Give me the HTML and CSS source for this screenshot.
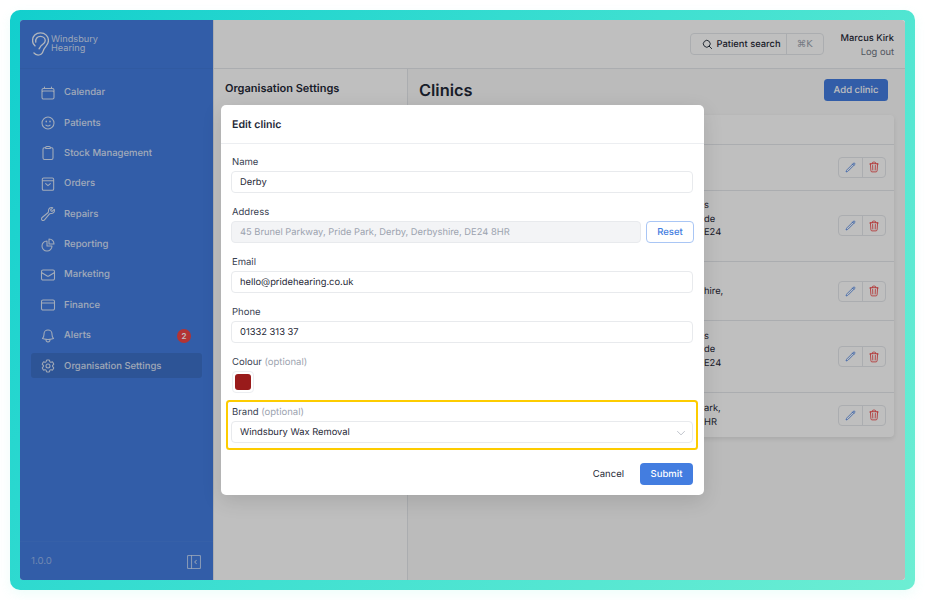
FILE: index.html
```html
<!DOCTYPE html>
<html lang="en">
<head>
<meta charset="utf-8">
<title>Edit clinic</title>
<link rel="stylesheet" href="styles.css">
</head>
<body>
<svg class="defs" aria-hidden="true">
  <symbol id="i-pencil" viewBox="0 0 24 24"><path d="M16.862 4.487l1.687-1.688a1.875 1.875 0 112.652 2.652L6.832 19.82a4.5 4.5 0 01-1.897 1.13l-2.685.8.8-2.685a4.5 4.5 0 011.13-1.897L16.863 4.487zm0 0L19.5 7.125"/></symbol>
  <symbol id="i-trash" viewBox="0 0 24 24"><path d="M14.74 9l-.346 9m-4.788 0L9.26 9m9.968-3.21c.342.052.682.107 1.022.166m-1.022-.165L18.16 19.673a2.25 2.25 0 01-2.244 2.077H8.084a2.25 2.25 0 01-2.244-2.077L4.772 5.79m14.456 0a48.108 48.108 0 00-3.478-.397m-12 .562c.34-.059.68-.114 1.022-.165m0 0a48.11 48.11 0 013.478-.397m7.5 0v-.916c0-1.18-.91-2.164-2.09-2.201a51.964 51.964 0 00-3.32 0c-1.18.037-2.09 1.022-2.09 2.201v.916m7.5 0a48.667 48.667 0 00-7.5 0"/></symbol>
</svg>
<div class="frame">
  <div class="app">
    <aside class="sidebar">
      <div class="brand">
        <svg class="ear" viewBox="0 0 18 25"><path d="M3.2 14.5C1.8 13.5.6 11.5.6 9 .6 4 4 .8 9 .8c5 0 8.4 3.4 8.4 8.2 0 5-4.4 6.5-5.4 10.5-1 3.5-3 4.7-5.5 4.7-2 0-3.5-.8-4.5-2.2"/><path d="M4 10.5C3.4 7 5.6 4.4 9 4.4c3 0 5 2.2 5 4.6 0 2.8-3 3.5-4.5 5.5-.9 1.3-1.5 2.5-2 3"/></svg>
        <div class="brand-name">Windsbury<br>Hearing</div>
      </div>
      <nav class="nav">
        <a class="nav-item"><svg class="ico" viewBox="0 0 24 24"><path d="M6.75 3v2.25M17.25 3v2.25M3 18.75V7.5a2.25 2.25 0 012.25-2.25h13.5A2.25 2.25 0 0121 7.5v11.25m-18 0A2.25 2.25 0 005.25 21h13.5A2.25 2.25 0 0021 18.75m-18 0v-7.5A2.25 2.25 0 015.25 9h13.5A2.25 2.25 0 0121 11.25v7.5"/></svg>Calendar</a>
        <a class="nav-item"><svg class="ico" viewBox="0 0 24 24"><path d="M15.182 15.182a4.5 4.5 0 01-6.364 0M21 12a9 9 0 11-18 0 9 9 0 0118 0zM9.75 9.75c0 .414-.168.75-.375.75S9 10.164 9 9.75 9.168 9 9.375 9s.375.336.375.75zm5.625 0c0 .414-.168.75-.375.75s-.375-.336-.375-.75.168-.75.375-.75.375.336.375.75z"/></svg>Patients</a>
        <a class="nav-item"><svg class="ico" viewBox="0 0 24 24"><path d="M15.666 3.888A2.25 2.25 0 0013.5 2.25h-3c-1.03 0-1.9.693-2.166 1.638m7.332 0c.055.194.084.4.084.612v0a.75.75 0 01-.75.75H9a.75.75 0 01-.75-.75v0c0-.212.03-.418.084-.612m7.332 0c.646.049 1.288.11 1.927.184 1.1.128 1.907 1.077 1.907 2.185V19.5a2.25 2.25 0 01-2.25 2.25H6.75A2.25 2.25 0 014.5 19.5V6.257c0-1.108.806-2.057 1.907-2.185a48.208 48.208 0 011.927-.184"/></svg>Stock Management</a>
        <a class="nav-item"><svg class="ico" viewBox="0 0 24 24"><path d="M5.5 3h13a2 2 0 012 2v14.5a2 2 0 01-2 2h-13a2 2 0 01-2-2V5a2 2 0 012-2zM3.5 7h17M8.5 11.5l3.5 3 3.5-3"/></svg>Orders</a>
        <a class="nav-item"><svg class="ico" viewBox="0 0 24 24"><path d="M21.75 6.75a4.5 4.5 0 01-4.884 4.484c-1.076-.091-2.264.071-2.95.904l-7.152 8.684a2.548 2.548 0 11-3.586-3.586l8.684-7.152c.833-.686.995-1.874.904-2.95a4.5 4.5 0 016.336-4.486l-3.276 3.276a3.004 3.004 0 002.25 2.25l3.276-3.276c.256.565.398 1.192.398 1.852z"/></svg>Repairs</a>
        <a class="nav-item"><svg class="ico" viewBox="0 0 24 24"><path d="M10.5 6a7.5 7.5 0 107.5 7.5h-7.5V6z"/><path d="M13.5 10.5H21A7.5 7.5 0 0013.5 3v7.5z"/></svg>Reporting</a>
        <a class="nav-item"><svg class="ico" viewBox="0 0 24 24"><path d="M21.75 6.75v10.5a2.25 2.25 0 01-2.25 2.25h-15a2.25 2.25 0 01-2.25-2.25V6.75m19.5 0A2.25 2.25 0 0019.5 4.5h-15a2.25 2.25 0 00-2.25 2.25m19.5 0v.243a2.25 2.25 0 01-1.07 1.916l-7.5 4.615a2.25 2.25 0 01-2.36 0L3.32 8.91a2.25 2.25 0 01-1.07-1.916V6.75"/></svg>Marketing</a>
        <a class="nav-item"><svg class="ico" viewBox="0 0 24 24"><path d="M2.25 9h19.5M4.5 19.5h15a2.25 2.25 0 002.25-2.25V6.75A2.25 2.25 0 0019.5 4.5h-15a2.25 2.25 0 00-2.25 2.25v10.5A2.25 2.25 0 004.5 19.5z"/></svg>Finance</a>
        <a class="nav-item"><svg class="ico" viewBox="0 0 24 24"><path d="M14.857 17.082a23.848 23.848 0 005.454-1.31A8.967 8.967 0 0118 9.75v-.7V9A6 6 0 006 9v.75a8.967 8.967 0 01-2.312 6.022c1.733.64 3.56 1.085 5.455 1.31m5.714 0a24.255 24.255 0 01-5.714 0m5.714 0a3 3 0 11-5.714 0"/></svg>Alerts<span class="badge">2</span></a>
        <a class="nav-item active"><svg class="ico" viewBox="0 0 24 24"><path d="M9.594 3.94c.09-.542.56-.94 1.11-.94h2.593c.55 0 1.02.398 1.11.94l.213 1.281c.063.374.313.686.645.87.074.04.147.083.22.127.324.196.72.257 1.075.124l1.217-.456a1.125 1.125 0 011.37.49l1.296 2.247a1.125 1.125 0 01-.26 1.431l-1.003.827c-.293.24-.438.613-.431.992a6.759 6.759 0 010 .255c-.007.378.138.75.43.99l1.005.828c.424.35.534.954.26 1.43l-1.298 2.247a1.125 1.125 0 01-1.369.491l-1.217-.456c-.355-.133-.75-.072-1.076.124a6.57 6.57 0 01-.22.128c-.331.183-.581.495-.644.869l-.213 1.28c-.09.543-.56.941-1.11.941h-2.594c-.55 0-1.02-.398-1.11-.94l-.213-1.281c-.062-.374-.312-.686-.644-.87a6.52 6.52 0 01-.22-.127c-.325-.196-.72-.257-1.076-.124l-1.217.456a1.125 1.125 0 01-1.369-.49l-1.297-2.247a1.125 1.125 0 01.26-1.431l1.004-.827c.292-.24.437-.613.43-.992a6.932 6.932 0 010-.255c.007-.378-.138-.75-.43-.99l-1.004-.828a1.125 1.125 0 01-.26-1.43l1.297-2.247a1.125 1.125 0 011.37-.491l1.216.456c.356.133.751.072 1.076-.124.072-.044.146-.087.22-.128.332-.183.582-.495.644-.869l.214-1.281z"/><path d="M15 12a3 3 0 11-6 0 3 3 0 016 0z"/></svg>Organisation Settings</a>
      </nav>
      <div class="side-foot">
        <span class="version">1.0.0</span>
        <svg class="collapse" viewBox="0 0 14 14"><rect x=".5" y=".5" width="13" height="13" rx="1"/><path d="M4.5 .5v13M9.6 5L7.8 7l1.8 2"/></svg>
      </div>
    </aside>
    <div class="content">
      <header class="topbar">
        <div class="search">
          <span class="search-main"><svg class="search-ico" viewBox="0 0 24 24"><path d="M21 21l-5.197-5.197m0 0A7.5 7.5 0 105.196 5.196a7.5 7.5 0 0010.607 10.607z"/></svg>Patient search</span>
          <span class="search-key">⌘K</span>
        </div>
        <div class="user">
          <div class="user-name">Marcus Kirk</div>
          <div class="user-out">Log out</div>
        </div>
      </header>
      <div class="panes">
        <div class="settings-col"><h2 class="settings-title">Organisation Settings</h2></div>
        <main class="clinics">
          <div class="clinics-head">
            <h1 class="clinics-title">Clinics</h1>
            <button class="add-btn">Add clinic</button>
          </div>
          <div class="table">
            <div class="t-head"></div>
            <div class="t-row r1"><div class="addr"></div><div class="actions"><span class="act"><svg class="pen"><use href="#i-pencil"/></svg></span><span class="act"><svg class="bin"><use href="#i-trash"/></svg></span></div></div>
            <div class="t-row r2"><div class="addr">s<br>de<br>E24<br>&nbsp;</div><div class="actions"><span class="act"><svg class="pen"><use href="#i-pencil"/></svg></span><span class="act"><svg class="bin"><use href="#i-trash"/></svg></span></div></div>
            <div class="t-row r3"><div class="addr">hire,</div><div class="actions"><span class="act"><svg class="pen"><use href="#i-pencil"/></svg></span><span class="act"><svg class="bin"><use href="#i-trash"/></svg></span></div></div>
            <div class="t-row r4"><div class="addr">s<br>de<br>E24<br>&nbsp;</div><div class="actions"><span class="act"><svg class="pen"><use href="#i-pencil"/></svg></span><span class="act"><svg class="bin"><use href="#i-trash"/></svg></span></div></div>
            <div class="t-row r5"><div class="addr">ark,<br>HR</div><div class="actions"><span class="act"><svg class="pen"><use href="#i-pencil"/></svg></span><span class="act"><svg class="bin"><use href="#i-trash"/></svg></span></div></div>
          </div>
        </main>
      </div>
    </div>
    <div class="overlay"></div>
    <section class="modal">
      <header class="modal-head">Edit clinic</header>
      <div class="modal-body">
        <div class="field"><label class="label">Name</label><div class="input">Derby</div></div>
        <div class="field"><label class="label">Address</label>
          <div class="input-row"><div class="input disabled">45 Brunel Parkway, Pride Park, Derby, Derbyshire, DE24 8HR</div><button class="reset">Reset</button></div>
        </div>
        <div class="field"><label class="label">Email</label><div class="input">hello@pridehearing.co.uk</div></div>
        <div class="field"><label class="label">Phone</label><div class="input">01332 313 37</div></div>
        <div class="field"><label class="label">Colour <span class="opt">(optional)</span></label><div class="swatch"><span class="swatch-fill"></span></div></div>
        <div class="field highlight"><label class="label">Brand <span class="opt">(optional)</span></label>
          <div class="input select">Windsbury Wax Removal<svg class="chev" viewBox="0 0 24 24"><path d="M19.5 8.25l-7.5 7.5-7.5-7.5"/></svg></div>
        </div>
      </div>
      <footer class="modal-foot">
        <button class="cancel">Cancel</button>
        <button class="submit">Submit</button>
      </footer>
    </section>
  </div>
</div>
</body>
</html>
```
FILE: styles.css
```css
* { box-sizing: border-box; }
html, body { margin: 0; height: 100%; background: #fff; }
body { font-family: Inter, "Noto Sans", sans-serif; color: #1f2937; overflow: hidden; text-rendering: geometricPrecision; }
button { text-rendering: geometricPrecision; }
.defs { display: none; }
.frame {
  width: 905px; height: 580px; margin: 10px; padding: 10px; border-radius: 10px;
  background: linear-gradient(125deg, #12cfcd 0%, #3fe0d1 50%, #6deed3 100%);
  box-shadow: 0 4px 12px rgba(110, 240, 215, .12);
}
.app { position: relative; display: flex; width: 885px; height: 560px; border-radius: 3px; overflow: hidden; background: #fafafa; }

/* sidebar */
.sidebar { flex: 0 0 193px; display: flex; flex-direction: column; background: #437de0; color: #fff; }
.brand { flex: 0 0 49px; display: flex; align-items: center; gap: 2px; padding: 0 0 0 12px; border-bottom: 1px solid rgba(0, 0, 0, .03); }
.ear { width: 17px; height: 24px; fill: none; stroke: rgba(255, 255, 255, .9); stroke-width: 1.4; stroke-linecap: round; }
.brand-name { font-size: 9.2px; line-height: 8.6px; font-weight: 400; color: rgba(255, 255, 255, .75); margin-top: 1px; }
.nav { flex: 1; display: flex; flex-direction: column; gap: 5.1px; padding: 10.5px 11px 0; }
.nav-item { display: flex; align-items: center; height: 25.3px; padding: 1px 0 0 8.5px; font-size: 9.5px; font-weight: 500; color: rgba(255, 255, 255, .8); border-radius: 3px; }
.nav-item.active { background: rgba(0, 0, 0, .1); }
.ico { flex: none; width: 16px; height: 16px; margin-right: 8.6px; fill: none; stroke: rgba(255, 255, 255, .8); stroke-width: 1.6; stroke-linecap: round; stroke-linejoin: round; }
.badge { margin-left: auto; margin-right: 11px; width: 14px; height: 14px; border-radius: 50%; background: #ef4444; color: #fff; font-size: 8px; font-weight: 600; display: flex; align-items: center; justify-content: center; }
.side-foot { flex: 0 0 39px; display: flex; align-items: center; justify-content: space-between; padding: 1px 12px 0 11px; border-top: 1px solid rgba(255, 255, 255, .03); }
.version { font-size: 9.6px; color: rgba(255, 255, 255, .45); }
.collapse { width: 14px; height: 14px; fill: none; stroke: rgba(255, 255, 255, .6); stroke-width: 1.1; }

/* content */
.content { flex: 1; min-width: 0; display: flex; flex-direction: column; border-left: 1px solid #e5e7eb; }
.topbar { flex: 0 0 49px; display: flex; align-items: center; justify-content: flex-end; gap: 17px; padding: 0 11px 0 0; background: #fff; border-bottom: 1px solid #e5e7eb; }
.search { display: flex; align-items: center; width: 134px; height: 22px; background: #fff; border: 1px solid #e5e7eb; border-radius: 4px; font-size: 9.35px; font-weight: 500; color: #1f2937; }
.search-main { flex: 1; display: flex; align-items: center; height: 100%; padding-left: 11px; border-right: 1px solid #e5e7eb; white-space: nowrap; }
.search-ico { width: 11px; height: 11px; margin-right: 4px; fill: none; stroke: #1f2937; stroke-width: 2; stroke-linecap: round; }
.search-key { flex: 0 0 36px; text-align: center; color: #9ca3af; font-family: "DejaVu Sans", sans-serif; font-size: 9.6px; font-weight: 400; }
.user { text-align: right; font-size: 9.3px; line-height: 14px; font-weight: 500; margin-top: 3px; }
.user-out { color: #6b7280; font-weight: 400; }
.panes { flex: 1; display: flex; min-height: 0; }
.settings-col { flex: 0 0 194px; padding: 12px 11px; background: #fff; border-right: 1px solid #e5e7eb; }
.settings-title { margin: 0; font-size: 11px; line-height: 14px; font-weight: 600; color: #1f2937; }
.clinics { flex: 1; padding: 10px 11px 0; background: #fafafa; min-width: 0; }
.clinics-head { display: flex; justify-content: space-between; align-items: center; height: 22px; margin-bottom: 14px; }
.clinics-title { margin: 0; font-size: 16.4px; font-weight: 600; color: #1f2937; }
.add-btn { width: 64px; height: 22px; padding: 1px 0 0; border: 0; border-radius: 3.5px; background: #437de0; color: #fff; font: 500 9.5px Inter, sans-serif; margin-right: 6px; }
.table { width: 475px; background: #fff; border-radius: 4px; box-shadow: 0 2px 5px rgba(0, 0, 0, .1); }
.t-head { height: 29px; }
.t-row { display: flex; align-items: center; justify-content: space-between; padding: 0 8px 0 285px; border-top: 1px solid #e5e7eb; font-size: 9.35px; line-height: 13.6px; }
.addr { padding-top: 1px; }
.r1 { height: 45.5px; }
.r2 { height: 71.5px; }
.r3 { height: 59px; }
.r4 { height: 72px; }
.r5 { height: 45px; }
.actions { display: flex; height: 21px; border: 1px solid #e5e7eb; border-radius: 4px; }
.act { width: 23px; display: flex; align-items: center; justify-content: center; }
.act + .act { border-left: 1px solid #e5e7eb; }
.pen, .bin { fill: none; stroke-width: 1.7; stroke-linecap: round; stroke-linejoin: round; }
.pen { width: 11px; height: 11px; stroke: #437de0; }
.bin { width: 12px; height: 12px; stroke: #ef4444; }

/* overlay + modal */
.overlay { position: absolute; inset: 0; background: rgba(0, 0, 0, .25); }
.modal { position: absolute; left: 201px; top: 85px; width: 483px; height: 390px; display: flex; flex-direction: column; background: #fff; border-radius: 5px; box-shadow: 0 6px 20px rgba(0, 0, 0, .12); }
.modal-head { flex: 0 0 39px; display: flex; align-items: center; padding-left: 11px; font-size: 10.6px; font-weight: 600; color: #1f2937; border-bottom: 1px solid #eceef1; }
.modal-body { display: flex; flex-direction: column; gap: 12px; padding: 11px 11px 0 10px; }
.field { display: flex; flex-direction: column; }
.label { height: 15px; margin-bottom: 1px; padding-left: 1px; font-size: 9.5px; line-height: 15px; color: #374151; font-weight: 400; }
.opt { color: #9ca3af; }
.input { display: flex; align-items: center; justify-content: space-between; height: 22px; padding: 1px 8px 0; font-size: 9.35px; color: #1f2937; border: 1px solid #e8eaed; border-radius: 4px; background: #fff; }
.input-row { display: flex; gap: 5px; }
.input.disabled { flex: 1; background: #f3f4f6; color: #9ca3af; }
.reset { flex: 0 0 48px; height: 22px; padding: 1px 0 0; background: #fff; border: 1px solid #a9c6f5; border-radius: 4px; color: #437de0; font: 500 9.5px Inter, sans-serif; margin-right: -1px; }
.swatch { width: 22px; height: 22px; padding: 2px; margin-left: 1px; border: 1px solid #eceef1; border-radius: 4px; }
.swatch-fill { display: block; width: 100%; height: 100%; border-radius: 3px; background: #991b1b; }
.highlight { margin: -5px; padding: 3px 3px 5px; border: 2px solid #fdcc00; border-radius: 3.5px; }
.chev { width: 12px; height: 12px; fill: none; stroke: #9ca3af; stroke-width: 1.3; margin-right: -3px; }
.modal-foot { display: flex; justify-content: flex-end; align-items: center; gap: 16px; margin-top: 18px; padding-right: 11px; }
.cancel { padding: 1px 0 0; border: 0; background: none; font: 400 9.5px Inter, sans-serif; color: #1f2937; }
.submit { width: 53px; height: 22px; padding: 1px 0 0; border: 0; border-radius: 4px; background: #437de0; color: #fff; font: 500 9.5px Inter, sans-serif; }
```
